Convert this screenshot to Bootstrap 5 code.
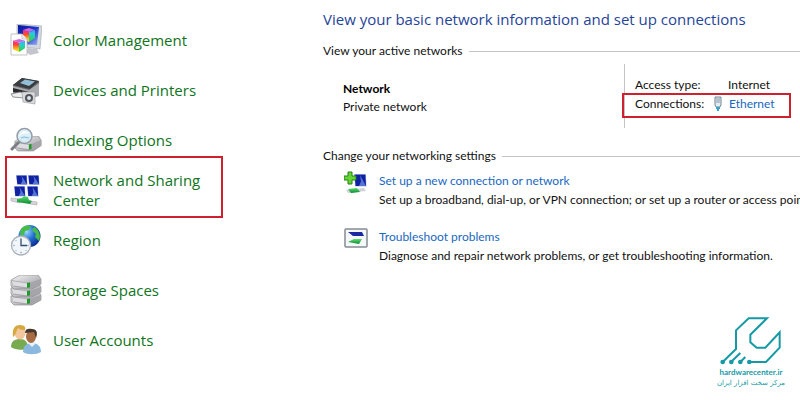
<!DOCTYPE html>
<html lang="en">
<head>
<meta charset="utf-8">
<meta name="viewport" content="width=device-width, initial-scale=1">
<title>Network and Sharing Center</title>
<link rel="stylesheet" href="https://cdn.jsdelivr.net/npm/bootstrap@5.3.0/dist/css/bootstrap.min.css">
<style>
body{font-family:"Open Sans","Noto Sans",sans-serif;font-size:12px;line-height:18px;color:#111;background:#fff}
a{text-decoration:none;color:#1a68c0}
a:hover{text-decoration:underline}
.cp-list{flex:0 0 312px;padding:15px 84px 0 10px}
.cp-item{min-height:50px;font-size:15px;line-height:20px;gap:11px}
.cp-item a{color:#0f7420}
.cp-item svg{flex:0 0 32px}
.marked{position:relative}
.marked::after{content:"";position:absolute;border:2px solid #cf2030;pointer-events:none}
.cp-item.marked::after{inset:-9px 5px -3px -5px}
.net-pane{padding:9px 0 0 11px;min-width:0;font-family:Lato,"Open Sans",sans-serif}
.net-title{font-family:"Open Sans",sans-serif;font-size:15px;line-height:20px;color:#1f4598;margin:0 0 13px}
.rule-title{font-size:12px;line-height:18px;margin:0;gap:6px;white-space:nowrap}
.rule-title::after{content:"";flex:1;border-top:1px solid #c4c4c4}
.net-card{padding-left:20px;margin:4px 0 19px}
.net-name{flex:0 0 281px;padding-top:16px}
.net-facts{border-left:1px solid #c4c4c4;padding:11px 0 15px 10px}
.fact{line-height:19px}
.fact dt{flex:0 0 77px;font-weight:400}
.fact dd{margin:0}
.fact svg{flex:0 0 17px}
.fact.marked::after{inset:-1px -16px -5px -13px}
.task{padding:6px 0 0 21px;gap:11px;line-height:19px;white-space:nowrap}
.task + .task{padding-top:18px}
.task svg{flex:0 0 24px}
.brand{color:#159aa5;padding:0 15px 12px 0}
.brand-url{font-family:Lato,sans-serif;font-size:8px;line-height:12px;font-weight:700;color:#159aa5}
.brand-fa{font-family:"DejaVu Sans",sans-serif;font-size:7px;line-height:10px}
</style>
</head>
<body>
<svg width="0" height="0" class="position-absolute" aria-hidden="true">
<defs>
<linearGradient id="steel" x1="0" y1="0" x2="1" y2="1"><stop offset="0" stop-color="#f8f8fa"/><stop offset=".6" stop-color="#bcbcc0"/><stop offset="1" stop-color="#75757c"/></linearGradient>
<linearGradient id="screen" x1="0" y1="0" x2="1" y2="1"><stop offset="0" stop-color="#0718a0"/><stop offset=".5" stop-color="#1c36c8"/><stop offset="1" stop-color="#9db8f4"/></linearGradient>
<linearGradient id="hueL" x1="0" y1="0" x2="0" y2="1"><stop offset="0" stop-color="#f42a9c"/><stop offset=".35" stop-color="#ff4630"/><stop offset=".7" stop-color="#ffb51c"/><stop offset="1" stop-color="#ffe92c"/></linearGradient>
<linearGradient id="hueR" x1="0" y1="0" x2="0" y2="1"><stop offset="0" stop-color="#6588ff"/><stop offset=".3" stop-color="#22cfd8"/><stop offset="1" stop-color="#35d436"/></linearGradient>
<linearGradient id="hueT" x1="0" y1="0" x2="1" y2="0"><stop offset="0" stop-color="#ff5dba"/><stop offset="1" stop-color="#9a74ff"/></linearGradient>
<radialGradient id="sea" cx=".35" cy=".3" r=".75"><stop offset="0" stop-color="#9cdcff"/><stop offset=".5" stop-color="#2470d4"/><stop offset="1" stop-color="#0b2a90"/></radialGradient>
<linearGradient id="pipe" x1="0" y1="0" x2="0" y2="1"><stop offset="0" stop-color="#5edc74"/><stop offset="1" stop-color="#0b8b32"/></linearGradient>
<symbol id="cube" viewBox="0 0 12 14" preserveAspectRatio="none"><path d="M0 2 6 0 12 2 6 4Z" fill="url(#hueT)"/><path d="M0 2 6 4V14L0 11Z" fill="url(#hueL)"/><path d="M12 2 6 4V14L12 10Z" fill="url(#hueR)"/></symbol>
<symbol id="drive" viewBox="0 0 32 15" preserveAspectRatio="none"><path d="M1 5 10 0H28L31 4V9L22 14H4L1 11Z" fill="url(#steel)" stroke="#8c8c92" stroke-width=".7"/><path d="M1 5 19 8 31 4V9L21 14 3 11.500Z" fill="#a5a5aa"/><path d="M2 6 18 8.500V12.500L3 10.500Z" fill="#dedee2"/><path d="m17 8 3-.8v5l-3 .8z" fill="#22982d"/></symbol>
<symbol id="mini" viewBox="0 0 14 12" preserveAspectRatio="none"><path d="M1 0H13L14 12H2Z" fill="#d8e2f8"/><path d="M1.500 .5H12.500L13 11H2.500Z" fill="#1021a2"/><path d="M7 1 13 11H6L8 7Z" fill="#5674d4"/></symbol>
</defs>
</svg>
<div class="d-flex align-items-stretch min-vh-100 overflow-hidden">
<nav class="cp-list" aria-label="Control Panel">
<ul class="list-unstyled mb-0">
<li class="cp-item d-flex align-items-center">
<svg width="32" height="32" viewBox="0 0 32 32"><path d="M7 0 32 2 30 25 7 22Z" fill="#d4d9e0" stroke="#9ba3ae" stroke-width=".6"/><path d="M8 1 29 3 27 21 8 20Z" fill="url(#screen)"/><path d="m18 24 9 1 2 4-9 2-4-3z" fill="#c2c5cb"/><use href="#cube" x="13" y="4" width="12" height="14"/><path d="M1 10H12L17 15V31H1Z" fill="#fff" stroke="#b4b4b8" stroke-width=".8"/><path d="M12 10V15H17" fill="#eee" stroke="#b4b4b8" stroke-width=".7"/><use href="#cube" x="3" y="15" width="12" height="13"/></svg>
<a href="#">Color Management</a></li>
<li class="cp-item d-flex align-items-center">
<svg width="32" height="32" viewBox="0 0 32 32"><path d="M3 11 12 4 29 7V17L18 20 3 17Z" fill="#64686d"/><path d="M3 11 12 4 29 7 20 15Z" fill="#383b3f"/><path d="M10 9 15 5.500 25 7.500 19 12Z" fill="#93bed6"/><path d="M3 12 19 16 29 9V22L19 25 3 20Z" fill="#a9abae"/><path d="M3 14 19 18V22L3 18Z" fill="#282a2d"/><path d="M1 20 10 18 18 20 14 24 3 23Z" fill="#eee" stroke="#77797c" stroke-width=".8"/><path d="M12 18H25V30L13 28Z" fill="#d8d9db" stroke="#96989b" stroke-width=".6"/><circle cx="19" cy="24" r="4" fill="#515358"/><circle cx="19" cy="24" r="2" fill="#d9e4ec"/></svg>
<a href="#">Devices and Printers</a></li>
<li class="cp-item d-flex align-items-center">
<svg width="32" height="32" viewBox="0 0 32 32"><use href="#drive" x="4" y="12" width="28" height="16"/><path d="m10 17-8 8" stroke="#7b7e83" stroke-width="3" stroke-linecap="round"/><circle cx="14.500" cy="12" r="7.500" fill="#d8eefa" fill-opacity=".9" stroke="#969ca5" stroke-width="1.500"/><path d="M9 12c2-5 6-6 10-3-4 0-7 1-10 3z" fill="#fff"/><path d="m11 14 3-1 5 1" stroke="#86bce0" fill="none"/></svg>
<a href="#">Indexing Options</a></li>
<li class="cp-item marked d-flex align-items-center">
<svg width="32" height="32" viewBox="0 0 32 32"><use href="#mini" x="5" y="1" width="13" height="10"/><use href="#mini" x="17" y="1" width="13" height="10"/><use href="#mini" x="3" y="12" width="13" height="11"/><use href="#mini" x="16" y="12" width="13" height="11"/><path d="m1 24 9 1v4l-9-2z" fill="#d4d6da" stroke="#a8aaaf" stroke-width=".6"/><path d="m20 27 7 1v3l-7-1z" fill="#d4d6da" stroke="#a8aaaf" stroke-width=".6"/><path d="m7 25 5-1 2-2 4 1 1 3 3 1-2 3-13-2z" fill="url(#pipe)"/></svg>
<a href="#">Network and Sharing Center</a></li>
<li class="cp-item d-flex align-items-center">
<svg width="32" height="32" viewBox="0 0 32 32"><circle cx="19.500" cy="12" r="11" fill="url(#sea)"/><path d="M11 5c3-4 8-4 10-3l-2 4-4 1-1 4-4 1zm13-2c6 3 7 10 5 14l-4-4 1-3-4-4z" fill="#48bd45"/><circle cx="11" cy="21.500" r="9.500" fill="#f0f6fb" stroke="#a8b1ba" stroke-width="1.300"/><g fill="#81909f"><circle cx="11" cy="14.500" r=".7"/><circle cx="18" cy="21.500" r=".7"/><circle cx="11" cy="28.500" r=".7"/><circle cx="4" cy="21.500" r=".7"/><circle cx="6" cy="16.500" r=".5"/><circle cx="16" cy="26.500" r=".5"/><circle cx="6" cy="26.500" r=".5"/></g><path d="M11 15v6.500h6" fill="none" stroke="#344f6c" stroke-width="1.300"/></svg>
<a href="#">Region</a></li>
<li class="cp-item d-flex align-items-center">
<svg width="32" height="32" viewBox="0 0 32 32"><use href="#drive" y="17" width="32" height="15"/><use href="#drive" y="9" width="32" height="15"/><use href="#drive" y="1" width="32" height="15"/></svg>
<a href="#">Storage Spaces</a></li>
<li class="cp-item d-flex align-items-center">
<svg width="32" height="32" viewBox="0 0 32 32"><path d="M1 23c0-6 4-8 9-8s8 3 8 9c-5 3-13 2-17-1z" fill="#78ab4f"/><ellipse cx="10" cy="9" rx="5.500" ry="6.500" fill="#f3c69c"/><path d="M3 13C2 4 5 1 10 1s6 3 5 5c-4 0-6-1-7-2-2 3-2 7-5 9z" fill="#d5a93d"/><path d="M13 28c0-6 4-9 9-9s9 3 9 9c-5 3-14 3-18 0z" fill="#8ab8df"/><path d="m18 19 4 4 4-4-4-3z" fill="#e8f2fb"/><ellipse cx="21" cy="12.500" rx="5" ry="6.500" fill="#a76c43"/><path d="M15 9c0-4 3-5 7-4 5 0 6 4 4 9l-2-6z" fill="#45362e"/></svg>
<a href="#">User Accounts</a></li>
</ul>
</nav>
<main class="net-pane d-flex flex-column flex-grow-1">
<h1 class="net-title fw-normal text-nowrap">View your basic network information and set up connections</h1>
<h2 class="rule-title d-flex align-items-center fw-normal">View your active networks</h2>
<section class="net-card d-flex">
<div class="net-name"><div class="fw-bold text-black">Network</div><div>Private network</div></div>
<dl class="net-facts mb-0">
<div class="fact d-flex"><dt>Access type:</dt><span class="ps-3"></span><dd>Internet</dd></div>
<div class="fact marked d-flex align-items-center"><dt>Connections:</dt><svg width="17" height="16" viewBox="0 0 17 16"><path d="M3 1h6v8L8 11H4L3 9z" fill="#e3edf4" stroke="#6c8493"/><path d="M5 2v5M7 2v5" stroke="#6c8493" stroke-width=".8"/><path d="M4 11h4v2H7v2H5v-2H4z" fill="#38a0cf"/></svg><dd><a href="#">Ethernet</a></dd></div>
</dl>
</section>
<h2 class="rule-title d-flex align-items-center fw-normal">Change your networking settings</h2>
<section class="task d-flex">
<svg width="24" height="26" viewBox="0 0 24 26"><use href="#mini" x="9" y="3" width="14" height="13"/><path d="m2 19 18-2 2 3-18 2z" fill="#cfd2d6"/><path d="m4 18 9-1 3 4-9 1z" fill="url(#pipe)"/><path d="M4 1h4v4h4v4H8v4H4V9H0V5h4z" fill="#66d335" stroke="#23801a"/></svg>
<div><a href="#">Set up a new connection or network</a><div>Set up a broadband, dial-up, or VPN connection; or set up a router or access point.</div></div>
</section>
<section class="task d-flex">
<svg width="24" height="22" viewBox="0 0 24 22"><rect x="1" y="2" width="22" height="18" rx="1" fill="#f5f7f9" stroke="#858c94" stroke-width="1.500"/><path d="M4 5h14l2 4H9z" fill="#1929a2"/><path d="m4 15 6-3h8l-3 5z" fill="url(#pipe)"/></svg>
<div><a href="#">Troubleshoot problems</a><div>Diagnose and repair network problems, or get troubleshooting information.</div></div>
</section>
<footer class="brand mt-auto ms-auto text-center text-nowrap">
<svg class="d-block mx-auto" width="65" height="50" viewBox="60 45 195 150" fill="none" stroke="#159aa5" stroke-width="6"><path d="M74 183 114 144V88L152 52H207L157 101V124L176 140H202L245 94V140L204 183H154"/><path d="M99 183 127 156M127 183 142 168"/><g fill="#159aa5" stroke="none"><circle cx="74" cy="183" r="7"/><circle cx="100" cy="183" r="7"/><circle cx="127" cy="183" r="7"/><circle cx="154" cy="183" r="7"/></g></svg>
<a class="brand-url d-block" href="#">hardwarecenter.ir</a>
<div class="brand-fa" lang="fa" dir="rtl">مرکز سخت افزار ایران</div>
</footer>
</main>
</div>
<script src="https://cdn.jsdelivr.net/npm/bootstrap@5.3.0/dist/js/bootstrap.bundle.min.js"></script>
</body>
</html>
